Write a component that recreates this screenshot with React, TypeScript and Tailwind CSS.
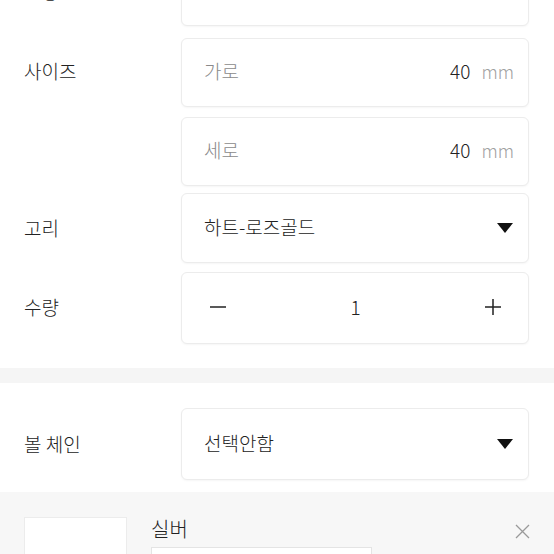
// Product option form (size / hook / quantity / ball chain)

const box = 'border border-[#ececec] rounded-[6px] bg-white shadow-[0_1px_2px_rgba(0,0,0,0.04)]';

function Caret() {
  return (
    <svg width="16" height="10" viewBox="0 0 16 10" className="shrink-0">
      <path d="M0 0 H16 L8 10 Z" fill="#111" />
    </svg>
  );
}

function SizeBox({ label, value }: { label: string; value: string }) {
  return (
    <div className={`${box} h-[69px] flex items-center pl-[22px] pr-[14px] pb-[3px]`}>
      <span className="text-[19px] text-[#8a8a8a]">{label}</span>
      <span className="ml-auto text-[19px] text-[#222]">{value}</span>
      <span className="ml-[11px] text-[18px] text-[#a0a0a0]">mm</span>
    </div>
  );
}

function SelectBox({ value, h }: { value: string; h: string }) {
  return (
    <div className={`${box} ${h} flex items-center pl-[22px] pr-[15px]`}>
      <span className="text-[19px] text-[#222] pb-[2px]">{value}</span>
      <span className="ml-auto">
        <Caret />
      </span>
    </div>
  );
}

export default function App() {
  return (
    <div className="w-[554px] h-[554px] overflow-hidden bg-white font-['Noto_Sans_CJK_KR','Noto_Sans',sans-serif] font-light text-[#222]">
      <div className="-mt-[43px] pl-[24px] pr-[25px] flex flex-col">
        <div className="flex items-center">
          <div className="w-[157px] text-[19px]">모양</div>
          <div className="flex-1">
            <SelectBox value="하트" h="h-[69px]" />
          </div>
        </div>

        <div className="flex items-start mt-[12px]">
          <div className="w-[157px] h-[66px] flex items-center text-[19px]">사이즈</div>
          <div className="flex-1 flex flex-col gap-[10px]">
            <SizeBox label="가로" value="40" />
            <SizeBox label="세로" value="40" />
          </div>
        </div>

        <div className="flex items-center mt-[7px]">
          <div className="w-[157px] text-[19px]">고리</div>
          <div className="flex-1">
            <SelectBox value="하트-로즈골드" h="h-[70px]" />
          </div>
        </div>

        <div className="flex items-center mt-[9px]">
          <div className="w-[157px] text-[19px] pb-[2px]">수량</div>
          <div className={`${box} flex-1 h-[72px] flex items-center justify-between pl-[28px] pr-[27px] pb-[2px]`}>
            <svg width="16" height="16" viewBox="0 0 16 16">
              <path d="M0 8 H16" stroke="#222" strokeWidth="1.5" />
            </svg>
            <span className="text-[19px]">1</span>
            <svg width="16" height="16" viewBox="0 0 16 16">
              <path d="M0 8 H16 M8 0 V16" stroke="#222" strokeWidth="1.5" />
            </svg>
          </div>
        </div>
      </div>

      <div className="mt-[24px] h-[15px] bg-[#f5f5f5]" />

      <div className="pt-[25px] pb-[12px] pl-[24px] pr-[25px] flex items-center">
        <div className="w-[157px] text-[19px]">볼 체인</div>
        <div className="flex-1">
          <SelectBox value="선택안함" h="h-[72px]" />
        </div>
      </div>

      <div className="bg-[#f7f7f7] h-[80px] pt-[25px] pl-[24px] pr-[24px] flex items-start">
        <div className="w-[103px] h-[80px] bg-white border border-[#ececec]" />
        <div className="ml-[24px] flex-1 flex flex-col">
          <div className="flex items-center -mt-[3px]">
            <span className="text-[20px]">실버</span>
            <svg width="15" height="15" viewBox="0 0 15 15" className="ml-auto mt-[4px]">
              <path d="M1 1 L14 14 M14 1 L1 14" stroke="#9a9a9a" strokeWidth="1.3" />
            </svg>
          </div>
          <div className="mt-[3px] w-[221px] h-[40px] bg-white border border-[#e4e4e4]" />
        </div>
      </div>
    </div>
  );
}
